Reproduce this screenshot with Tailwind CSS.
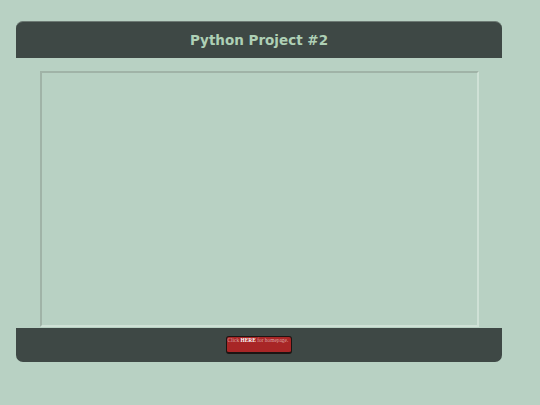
<!DOCTYPE html>
<html lang="en">
<head>
  <meta charset="UTF-8">
  <title>Python Project #2</title>
  <script src="https://cdn.jsdelivr.net/npm/@tailwindcss/browser@4"></script>
</head>
<body class="bg-[#b8d1c3] overflow-hidden">
  <div class="w-[486px] ml-4 pt-[21px]">
    <!-- Header -->
    <div class="h-[37px] bg-[#3e4845] rounded-t-[7px] flex items-center justify-center pt-px border-t border-t-[#6d7a74]">
      <h1 class="font-['DejaVu_Sans'] font-bold text-[13.5px] text-[#aed0b5]">Python Project #2</h1>
    </div>

    <!-- Frame -->
    <div class="ml-6 mt-[13px] w-[439px] h-[256px] border-2 border-t-[#a0b3a7] border-l-[#a0b3a7] border-r-[#cfe1d6] border-b-[#cfe1d6]"></div>

    <!-- Footer -->
    <div class="mt-px h-[34px] bg-[#3e4845] rounded-b-[7px] flex justify-center pt-2">
      <a class="block w-[66px] h-[18px] ml-[-1px] bg-[#a82626] border border-b-2 border-[#1c1412] rounded-[3px] font-['Liberation_Serif'] text-[5.4px] leading-[6px] pl-[1px] text-[#dca5a5] whitespace-nowrap">Click <b class="text-white">HERE</b> for homepage.</a>
    </div>
  </div>
</body>
</html>
